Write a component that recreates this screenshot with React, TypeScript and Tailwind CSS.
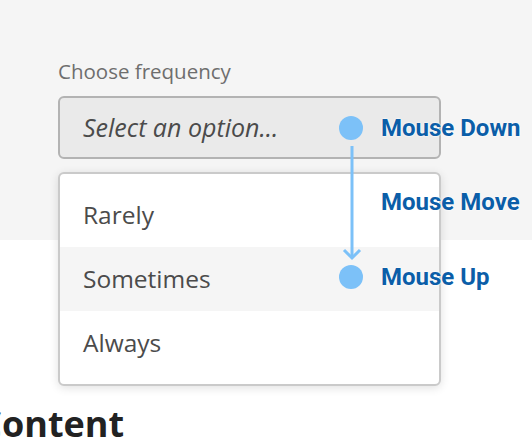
import React from 'react'

const items = ['Rarely', 'Sometimes', 'Always']

const noteText =
  "text-[24px] leading-[30px] font-bold text-[#0b5ea8] [font-family:Roboto,sans-serif] [text-shadow:0_0_2px_#fff,0_0_2px_#fff]"

function Marker({ label, top }: { label: string; top: number }) {
  return (
    <div className="absolute left-[339px] flex items-center" style={{ top }}>
      <span className="w-6 h-6 rounded-full bg-[#7cc1f8]" />
      <span className={`ml-[18px] ${noteText}`}>{label}</span>
    </div>
  )
}

export default function App() {
  return (
    <div className="relative w-[532px] h-[437px] overflow-hidden bg-white [font-family:'Open_Sans',sans-serif]">
      <div className="h-[240px] bg-[#f5f5f5] pt-[56px] pl-[58px]">
        <div className="text-[20.5px] leading-[30px] text-[#6e6e6e]">Choose frequency</div>
        <button className="mt-[10px] w-[383px] h-[63px] flex items-center pl-[23px] rounded-[6px] border-2 border-[#b3b3b3] bg-[#eaeaea] text-left">
          <span className="italic text-[25px] text-[#4b4b4b]">Select an option...</span>
        </button>
      </div>

      {/* menu popover */}
      <div className="absolute left-[58px] top-[172px] w-[383px] py-[9px] rounded-[6px] border-2 border-[#cacaca] bg-white shadow-[0_2px_10px_rgba(0,0,0,0.12)]">
        {items.map((item) => (
          <div
            key={item}
            className={`h-[64px] flex items-center pl-[23px] text-[24.5px] text-[#4b4b4b] ${item === 'Sometimes' ? 'bg-[#f5f5f5]' : ''}`}
          >
            {item}
          </div>
        ))}
      </div>

      <div className="mt-[166px] -ml-[21px] text-[36px] leading-[36px] font-bold text-[#222]">Content</div>

      {/* gesture annotation */}
      <svg className="absolute left-[340px] top-[146px]" width="24" height="116" viewBox="0 0 24 116">
        <line x1="12" y1="0" x2="12" y2="112" stroke="#7cc1f8" strokeWidth="3" />
        <path d="M4 104 L12 112 L20 104" fill="none" stroke="#7cc1f8" strokeWidth="3" />
      </svg>
      <Marker label="Mouse Down" top={113} />
      <div className={`absolute left-[381px] top-[187px] ${noteText}`}>Mouse Move</div>
      <Marker label="Mouse Up" top={262} />
    </div>
  )
}
